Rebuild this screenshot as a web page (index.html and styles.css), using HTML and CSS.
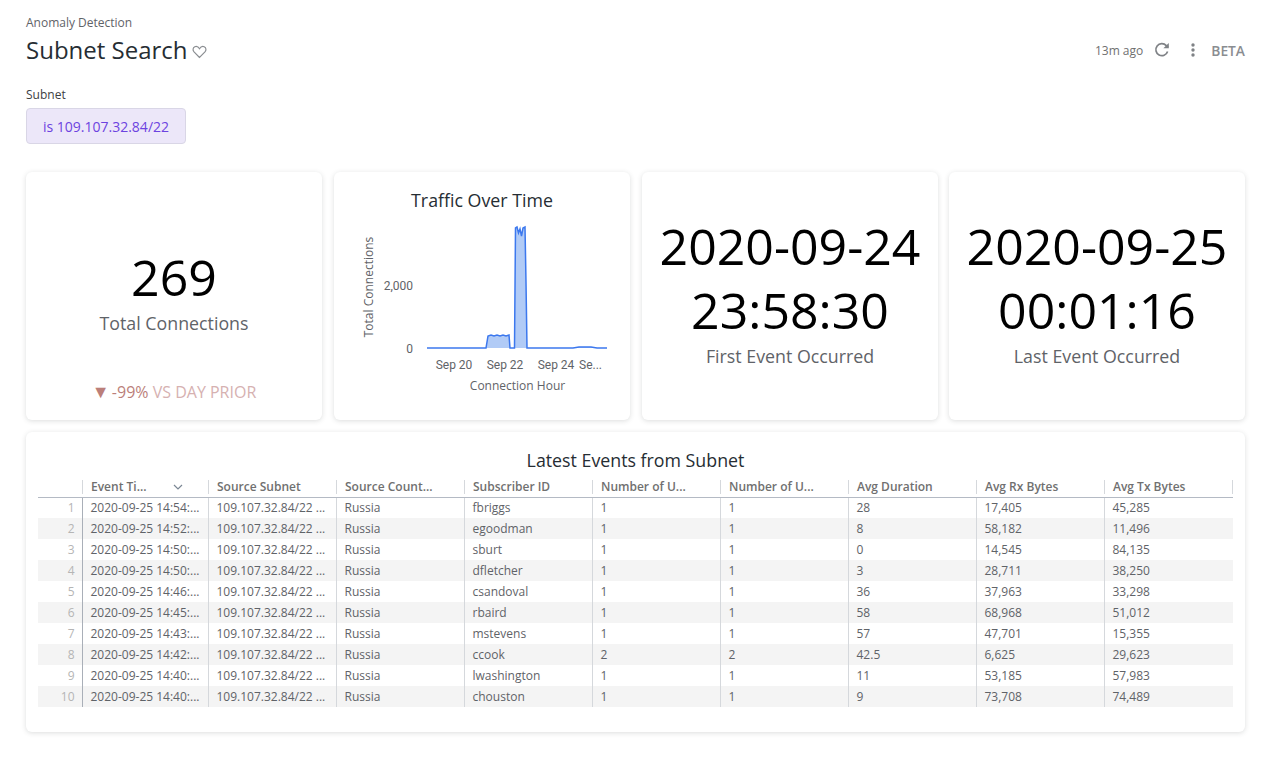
FILE: index.html
```html
<!DOCTYPE html>
<html lang="en">
<head>
    <meta charset="UTF-8">
    <meta name="viewport" content="width=device-width, initial-scale=1.0">
    <title>Subnet Search</title>
    <link rel="stylesheet" href="styles.css">
</head>
<body>
    <header class="top">
        <div>
            <div class="crumb">Anomaly Detection</div>
            <h1 class="title">Subnet Search<svg class="heart" width="15" height="15" viewBox="0 0 14 14"><path d="M7 12.6 1.9 7.4C.4 5.8.8 3.4 2.6 2.6c1.7-.7 3.3 0 4.4 1.8 1.1-1.8 2.7-2.5 4.4-1.8 1.8.8 2.2 3.2.7 4.8z" fill="none" stroke="#8a8d91" stroke-width="1.1"/></svg></h1>
        </div>
        <div class="tools">
            <span class="ago">13m ago</span>
            <svg class="reload" width="16" height="16" viewBox="0 0 16 16"><path d="M13.6 9.5A6 6 0 1 1 12.3 3.6L14 5.2" fill="none" stroke="#7f8286" stroke-width="1.7"/><path d="M14.8 .9v5.4H9.4z" fill="#7f8286"/></svg>
            <svg class="dots" width="4" height="14" viewBox="0 0 4 14"><circle cx="2" cy="2" r="1.7" fill="#7f8286"/><circle cx="2" cy="7" r="1.7" fill="#7f8286"/><circle cx="2" cy="12" r="1.7" fill="#7f8286"/></svg>
            <span class="beta">BETA</span>
        </div>
    </header>

    <div class="filter">
        <div class="filter-label">Subnet</div>
        <div class="chip">is 109.107.32.84/22</div>
    </div>

    <section class="tiles">
        <div class="card stat">
            <div class="stat-main">
                <div class="big">269</div>
                <div class="stat-label">Total Connections</div>
            </div>
            <div class="compare"><span class="arrow">▼</span> <span class="pct">-99%</span> VS DAY PRIOR</div>
        </div>
        <div class="card chart">
            <div class="card-title">Traffic Over Time</div>
            <svg class="plot" width="296" height="204" viewBox="0 0 296 204">
                <text class="axis-title" transform="translate(39 115) rotate(-90)" text-anchor="middle">Total Connections</text>
                <text class="tick" x="79" y="118" text-anchor="end">2,000</text>
                <text class="tick" x="79" y="181" text-anchor="end">0</text>
                <path class="area" d="M93 176H152L154 164 157 163 160 164 163 163 166 164 169 163 172 164 175 163 176 176H180.5L181.5 56 183 55 184.5 61 186 57 187.5 64 189 56 191 55 192 110 193 176H239L245 175 257 175 263 176H273Z"/>
                <path class="line" d="M93 176H152L154 164 157 163 160 164 163 163 166 164 169 163 172 164 175 163 176 176H180.5L181.5 56 183 55 184.5 61 186 57 187.5 64 189 56 191 55 192 110 193 176H239L245 175 257 175 263 176H273"/>
                <text class="tick" x="120" y="197" text-anchor="middle">Sep 20</text>
                <text class="tick" x="171" y="197" text-anchor="middle">Sep 22</text>
                <text class="tick" x="222" y="197" text-anchor="middle">Sep 24</text>
                <text class="tick" x="245" y="197">Se...</text>
            </svg>
            <div class="x-title">Connection Hour</div>
        </div>
        <div class="card stat stat-date">
            <div class="big">2020-09-24<br>23:58:30</div>
            <div class="stat-label">First Event Occurred</div>
        </div>
        <div class="card stat stat-date">
            <div class="big">2020-09-25<br>00:01:16</div>
            <div class="stat-label">Last Event Occurred</div>
        </div>
    </section>

    <section class="card events">
        <div class="events-title">Latest Events from Subnet</div>
        <table>
            <colgroup>
                <col class="col-num"><col class="col-time"><col class="col-std"><col class="col-std"><col class="col-std"><col class="col-std"><col class="col-std"><col class="col-std"><col class="col-std"><col>
            </colgroup>
            <thead>
                <tr>
                    <th></th>
                    <th><div class="sort">Event Ti...<svg width="10" height="6" viewBox="0 0 10 6"><path d="M1 1l4 4 4-4" fill="none" stroke="#7b8794" stroke-width="1.2"/></svg></div></th>
                    <th>Source Subnet</th>
                    <th>Source Count...</th>
                    <th>Subscriber ID</th>
                    <th>Number of U...</th>
                    <th>Number of U...</th>
                    <th>Avg Duration</th>
                    <th>Avg Rx Bytes</th>
                    <th>Avg Tx Bytes</th>
                </tr>
            </thead>
            <tbody>
                <tr><td>1</td><td>2020-09-25 14:54:...</td><td>109.107.32.84/22 ...</td><td>Russia</td><td>fbriggs</td><td>1</td><td>1</td><td>28</td><td>17,405</td><td>45,285</td></tr>
                <tr><td>2</td><td>2020-09-25 14:52:...</td><td>109.107.32.84/22 ...</td><td>Russia</td><td>egoodman</td><td>1</td><td>1</td><td>8</td><td>58,182</td><td>11,496</td></tr>
                <tr><td>3</td><td>2020-09-25 14:50:...</td><td>109.107.32.84/22 ...</td><td>Russia</td><td>sburt</td><td>1</td><td>1</td><td>0</td><td>14,545</td><td>84,135</td></tr>
                <tr><td>4</td><td>2020-09-25 14:50:...</td><td>109.107.32.84/22 ...</td><td>Russia</td><td>dfletcher</td><td>1</td><td>1</td><td>3</td><td>28,711</td><td>38,250</td></tr>
                <tr><td>5</td><td>2020-09-25 14:46:...</td><td>109.107.32.84/22 ...</td><td>Russia</td><td>csandoval</td><td>1</td><td>1</td><td>36</td><td>37,963</td><td>33,298</td></tr>
                <tr><td>6</td><td>2020-09-25 14:45:...</td><td>109.107.32.84/22 ...</td><td>Russia</td><td>rbaird</td><td>1</td><td>1</td><td>58</td><td>68,968</td><td>51,012</td></tr>
                <tr><td>7</td><td>2020-09-25 14:43:...</td><td>109.107.32.84/22 ...</td><td>Russia</td><td>mstevens</td><td>1</td><td>1</td><td>57</td><td>47,701</td><td>15,355</td></tr>
                <tr><td>8</td><td>2020-09-25 14:42:...</td><td>109.107.32.84/22 ...</td><td>Russia</td><td>ccook</td><td>2</td><td>2</td><td>42.5</td><td>6,625</td><td>29,623</td></tr>
                <tr><td>9</td><td>2020-09-25 14:40:...</td><td>109.107.32.84/22 ...</td><td>Russia</td><td>lwashington</td><td>1</td><td>1</td><td>11</td><td>53,185</td><td>57,983</td></tr>
                <tr><td>10</td><td>2020-09-25 14:40:...</td><td>109.107.32.84/22 ...</td><td>Russia</td><td>chouston</td><td>1</td><td>1</td><td>9</td><td>73,708</td><td>74,489</td></tr>
            </tbody>
        </table>
    </section>
</body>
</html>
```

FILE: styles.css
```css
* {
    box-sizing: border-box;
}
body {
    margin: 0;
    padding: 14px 42px 20px 26px;
    background: #fff;
    color: #262d33;
    font-family: "Open Sans", sans-serif;
}
.top {
    display: flex;
    justify-content: space-between;
    align-items: flex-end;
    height: 52px;
}
.crumb {
    font-size: 12px;
    line-height: 17px;
    margin-top: -4px;
    color: #5f6368;
}
.title {
    margin: 3px 0 0;
    font-size: 24px;
    font-weight: 400;
    line-height: 32px;
}
.heart {
    margin-left: 4px;
}
.tools {
    display: flex;
    align-items: center;
    height: 32px;
    color: #707070;
}
.ago {
    font-size: 12px;
    margin-right: 11px;
}
.reload {
    margin-right: 21px;
}
.dots {
    margin-right: 16px;
}
.beta {
    font-size: 13.8px;
    font-weight: 600;
    color: #8a8d91;
}
.filter {
    margin-top: 20px;
}
.filter-label {
    font-size: 12px;
    line-height: 17px;
    color: #3c4043;
}
.chip {
    display: flex;
    align-items: center;
    justify-content: center;
    width: 160px;
    height: 36px;
    margin-top: 5px;
    background: #ece7f9;
    border: 1px solid #d9d6e6;
    border-radius: 4px;
    color: #6c43e0;
    font-size: 14px;
}
.card {
    background: #fff;
    border-radius: 6px;
    box-shadow: 0 1px 5px rgba(60, 64, 67, 0.18);
}
.tiles {
    display: grid;
    grid-template-columns: 296px 296px 296px 296px;
    column-gap: 12px;
    height: 248px;
    margin-top: 28px;
}
.tiles .card:last-child {
    margin: 0 1px 0 -1px;
}
.stat {
    position: relative;
    display: flex;
    flex-direction: column;
    align-items: center;
    text-align: center;
}
.big {
    font-size: 50px;
    line-height: 64px;
    color: #000;
}
.stat-main {
    padding-top: 73px;
}
.stat-label {
    margin-top: 2px;
    font-size: 17.8px;
    line-height: 24px;
    color: #5f6368;
}
.stat-date {
    padding-top: 42px;
}
.compare {
    position: absolute;
    left: 0;
    right: 0;
    bottom: 17px;
    font-size: 16px;
    line-height: 22px;
    color: #d6b1b1;
}
.arrow,
.pct {
    color: #bb7f7a;
}
.arrow {
    display: inline-block;
    width: 16px;
    font-size: 18px;
    text-align: left;
}
.chart {
    position: relative;
}
.card-title {
    padding-top: 16px;
    font-size: 17.8px;
    line-height: 24px;
    text-align: center;
    color: #262d33;
}
.plot {
    position: absolute;
    left: 0;
    top: 0;
}
.tick {
    font-family: Roboto, sans-serif;
    font-size: 12px;
    fill: #5f6368;
}
.axis-title {
    font-family: "Open Sans", sans-serif;
    font-size: 12px;
    fill: #5f6368;
}
.area {
    fill: #b1cbf6;
}
.line {
    fill: none;
    stroke: #3c78ee;
    stroke-width: 1.5;
}
.x-title {
    position: absolute;
    left: 0;
    right: 0;
    top: 207px;
    padding-left: 71px;
    font-size: 12px;
    line-height: 14px;
    text-align: center;
    color: #5f6368;
}
.events {
    width: 1219px;
    height: 300px;
    margin-top: 12px;
    padding: 16px 12px 0;
}
.events-title {
    font-size: 17.8px;
    line-height: 24px;
    text-align: center;
    color: #262d33;
}
table {
    width: 1195px;
    margin-top: 5px;
    border-collapse: collapse;
    table-layout: fixed;
    font-size: 12px;
    color: #5f6368;
}
.col-num {
    width: 44px;
}
.col-time {
    width: 126px;
}
.col-std {
    width: 128px;
}
th {
    position: relative;
    height: 20px;
    padding: 0 0 0 9px;
    text-align: left;
    font-weight: 600;
    color: #707070;
    border-bottom: 1px solid #b4bac4;
    white-space: nowrap;
}
th::before {
    content: "";
    position: absolute;
    left: 0;
    top: 3px;
    bottom: 3px;
    border-left: 1px solid #d5d8dc;
}
th:first-child::before {
    display: none;
}
th:last-child::after {
    content: "";
    position: absolute;
    right: 0;
    top: 3px;
    bottom: 3px;
    border-left: 1px solid #d5d8dc;
}
.sort {
    display: flex;
    justify-content: space-between;
    align-items: center;
    padding-right: 25px;
}
td {
    height: 21px;
    padding: 0 0 0 8px;
    border-left: 1px solid #d5d8dc;
    white-space: nowrap;
    overflow: hidden;
}
td:first-child {
    padding: 0 7px 0 0;
    border-left: 0;
    border-right: 1px solid #a9afb8;
    text-align: right;
    color: #b5b5b5;
}
tbody tr:nth-child(even) {
    background: #f4f4f4;
}
```
